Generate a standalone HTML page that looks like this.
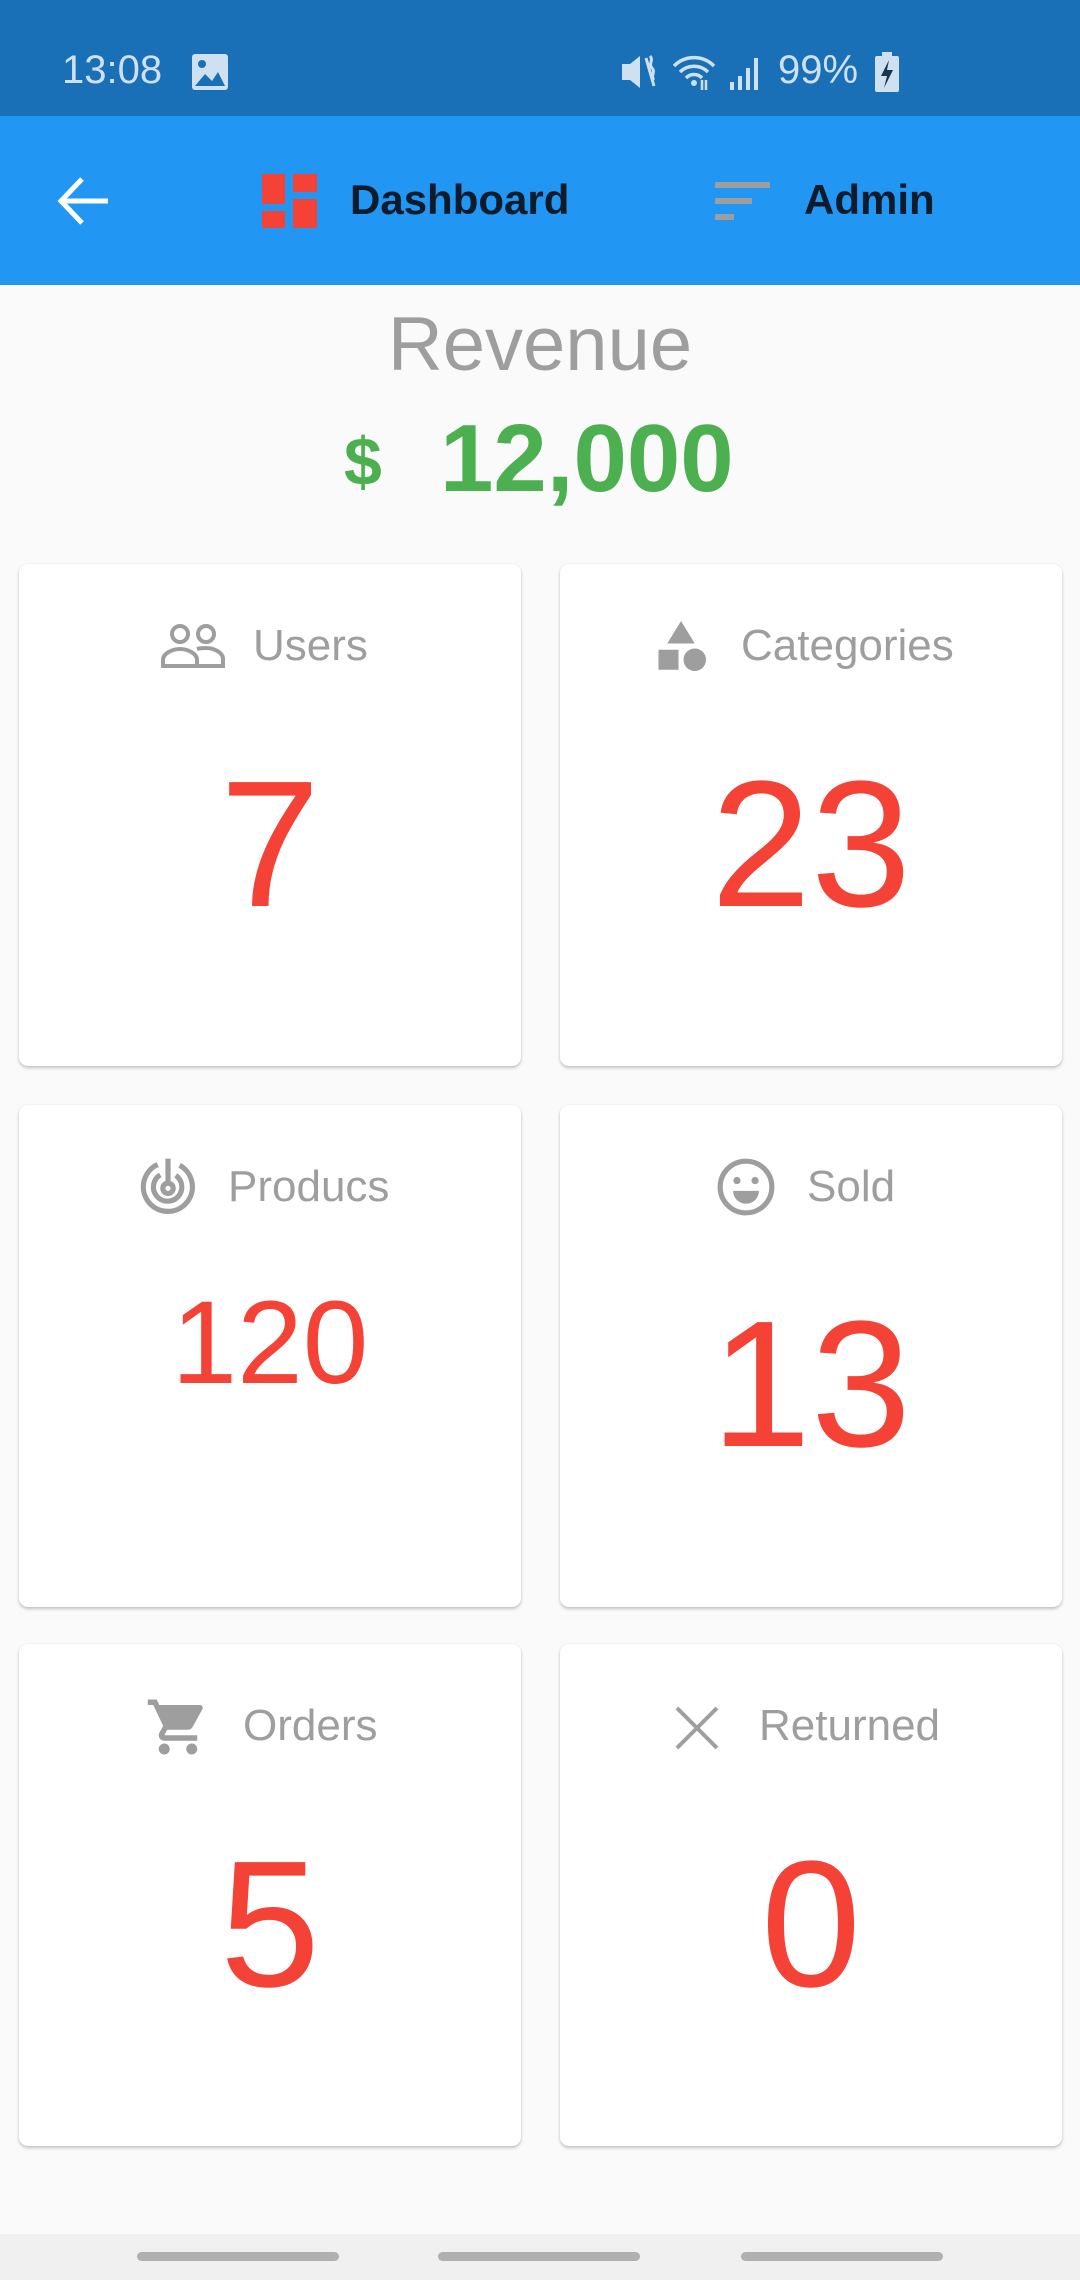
<!DOCTYPE html>
<html><head><meta charset="utf-8"><style>
*{margin:0;padding:0;box-sizing:border-box}
body{width:1080px;height:2280px;background:#fafafa;font-family:"Liberation Sans",Roboto,sans-serif;position:relative;overflow:hidden}
.abs{position:absolute}
.card{position:absolute;width:502px;height:502px;background:#fff;border-radius:9px;box-shadow:0 2px 3px rgba(0,0,0,.22),0 0 2px rgba(0,0,0,.06)}
.lbl{position:absolute;font-size:44px;color:#9e9e9e;line-height:44px;top:60px}
.ic{position:absolute;top:48px}
.num{position:absolute;left:0;width:502px;text-align:center;color:#f44336}
</style></head><body>
<div class="abs" style="left:0;top:0;width:1080px;height:116px;background:#1a70b6"></div>
<div class="abs" style="left:62px;top:46px;font-size:40px;color:#cfe0f1;line-height:48px">13:08</div>
<svg class="abs" style="left:192px;top:54px" width="36" height="36" viewBox="0 0 36 36"><rect x="0" y="0" width="36" height="36" rx="3" fill="#cfe0f1"/><circle cx="10" cy="10" r="4" fill="#1a70b6"/><path d="M3 32 L13 20 L20 27 L26 18 L33 32Z" fill="#1a70b6"/></svg>
<svg class="abs" style="left:620px;top:52px" width="44" height="40" viewBox="0 0 44 40"><path d="M2 12h8l10-8v32l-10-8H2z" fill="#cfe0f1"/><path d="M26 6l8 28M30 4c4 4-2 8 2 12s-2 8 2 12" stroke="#cfe0f1" stroke-width="3" fill="none"/></svg>
<svg class="abs" style="left:672px;top:52px" width="48" height="40" viewBox="0 0 48 40"><path d="M2 14a28 28 0 0 1 40 0M8 20a20 20 0 0 1 28 0M14 26a11 11 0 0 1 16 0" stroke="#cfe0f1" stroke-width="3.5" fill="none"/><circle cx="22" cy="31" r="3" fill="#cfe0f1"/><path d="M30 28v10M34 38v-10" stroke="#cfe0f1" stroke-width="2.5"/></svg>
<svg class="abs" style="left:728px;top:56px" width="36" height="34" viewBox="0 0 36 34"><rect x="2" y="26" width="4" height="8" fill="#cfe0f1"/><rect x="10" y="20" width="4" height="14" fill="#cfe0f1"/><rect x="18" y="12" width="4" height="22" fill="#cfe0f1"/><rect x="26" y="2" width="4" height="32" fill="#cfe0f1"/></svg>
<div class="abs" style="left:778px;top:46px;font-size:40px;color:#cfe0f1;line-height:48px">99%</div>
<svg class="abs" style="left:875px;top:52px" width="24" height="40" viewBox="0 0 24 40"><rect x="7" y="0" width="10" height="4" fill="#cfe0f1"/><rect x="0" y="4" width="24" height="36" rx="2" fill="#cfe0f1"/><path d="M14 8 L6 24 H12 L9 36 L18 18 H12Z" fill="#1a3550"/></svg>

<div class="abs" style="left:0;top:116px;width:1080px;height:169px;background:#2196f3"></div>
<svg class="abs" style="left:56px;top:176px" width="56" height="50" viewBox="0 0 56 50"><path d="M52 25H6M26 3L5 25l21 22" stroke="#fff" stroke-width="5" fill="none"/></svg>
<div class="abs" style="left:262px;top:174px;width:23px;height:30px;background:#f44336"></div>
<div class="abs" style="left:262px;top:211px;width:23px;height:17px;background:#f44336"></div>
<div class="abs" style="left:293px;top:174px;width:24px;height:18px;background:#f44336"></div>
<div class="abs" style="left:293px;top:199px;width:24px;height:29px;background:#f44336"></div>
<div class="abs" style="left:350px;top:176px;font-size:42px;font-weight:bold;color:#0d1b2a;line-height:48px">Dashboard</div>
<div class="abs" style="left:715px;top:182px;width:55px;height:6px;background:#9e9e9e"></div>
<div class="abs" style="left:715px;top:198px;width:37px;height:6px;background:#9e9e9e"></div>
<div class="abs" style="left:715px;top:214px;width:19px;height:6px;background:#9e9e9e"></div>
<div class="abs" style="left:804px;top:176px;font-size:42px;font-weight:bold;color:#0d1b2a;line-height:48px">Admin</div>

<div class="abs" style="left:0;top:307px;width:1080px;text-align:center;font-size:76px;line-height:76px;color:#9e9e9e">Revenue</div>
<div class="abs" style="left:344px;top:420px;font-size:68px;line-height:84px;color:#4caf50;font-weight:bold">$</div>
<div class="abs" style="left:440px;top:404px;font-size:96px;line-height:110px;color:#4caf50;font-weight:bold">12,000</div>

<div class="card" style="left:19px;top:564px">
<svg class="ic" style="left:141px;top:58px" width="66" height="48" viewBox="0 0 66 48"><g stroke="#9e9e9e" stroke-width="4" fill="none"><circle cx="20" cy="12" r="8"/><circle cx="46" cy="12" r="8"/><path d="M3 44v-6c0-7 10-11 17-11s17 4 17 11v6zM37 27c3-1 6-1 9-1 7 0 17 4 17 11v7H37"/></g></svg>
<div class="lbl" style="left:234px">Users</div>
<div class="num" style="top:191px;font-size:180px;line-height:180px">7</div>
</div>
<div class="card" style="left:560px;top:564px">
<svg class="ic" style="left:91px;top:52px" width="60" height="60" viewBox="0 0 24 24"><path fill="#9e9e9e" d="M12 2l-5.5 9h11zM3 13.5h8v8H3zM17.5 13a4.5 4.5 0 1 0 0.01 0z"/></svg>
<div class="lbl" style="left:181px">Categories</div>
<div class="num" style="top:191px;font-size:180px;line-height:180px">23</div>
</div>
<div class="card" style="left:19px;top:1105px">
<svg class="ic" style="left:118px;top:51px" width="62" height="62" viewBox="0 0 24 24"><g stroke="#9e9e9e" stroke-width="2" fill="none"><path d="M8 3.3A9.5 9.5 0 1 0 16.5 3.6"/><path d="M9 7.3A5.5 5.5 0 1 0 15 7.5"/><circle cx="12" cy="12.5" r="2"/><path d="M12 10.5V1"/></g></svg>
<div class="lbl" style="left:209px">Producs</div>
<div class="num" style="top:179px;font-size:118px;line-height:118px">120</div>
</div>
<div class="card" style="left:560px;top:1105px">
<svg class="ic" style="left:155px;top:51px" width="62" height="62" viewBox="0 0 24 24"><circle cx="12" cy="12" r="10" stroke="#9e9e9e" stroke-width="2" fill="none"/><circle cx="8.5" cy="9.5" r="1.4" fill="#9e9e9e"/><circle cx="15.5" cy="9.5" r="1.4" fill="#9e9e9e"/><path d="M7 13.5h10a5 5 0 0 1-10 0z" fill="#9e9e9e"/></svg>
<div class="lbl" style="left:247px">Sold</div>
<div class="num" style="top:190px;font-size:180px;line-height:180px">13</div>
</div>
<div class="card" style="left:19px;top:1644px">
<svg class="ic" style="left:126px;top:50px" width="66" height="66" viewBox="0 0 24 24"><path fill="#9e9e9e" d="M7 18c-1.1 0-2 .9-2 2s.9 2 2 2 2-.9 2-2-.9-2-2-2zM1 2v2h2l3.6 7.6-1.35 2.45c-.16.28-.25.61-.25.96 0 1.1.9 2 2 2h12v-2H7.42c-.14 0-.25-.11-.25-.25l.03-.12.9-1.630h7.45c.75 0 1.41-.41 1.75-1.03l3.58-6.49A1 1 0 0 0 20 4H5.21l-.94-2H1zm16 16c-1.1 0-2 .9-2 2s.9 2 2 2 2-.9 2-2-.9-2-2-2z"/></svg>
<div class="lbl" style="left:224px">Orders</div>
<div class="num" style="top:191px;font-size:180px;line-height:180px">5</div>
</div>
<div class="card" style="left:560px;top:1644px">
<svg class="ic" style="left:113px;top:60px" width="48" height="48" viewBox="0 0 48 48"><path d="M4 4L44 44M44 4L4 44" stroke="#9e9e9e" stroke-width="4"/></svg>
<div class="lbl" style="left:199px">Returned</div>
<div class="num" style="top:191px;font-size:180px;line-height:180px">0</div>
</div>

<div class="abs" style="left:0;top:2234px;width:1080px;height:46px;background:#f0f0f0"></div>
<div class="abs" style="left:137px;top:2252px;width:202px;height:9px;border-radius:5px;background:#b0b0b0"></div>
<div class="abs" style="left:438px;top:2252px;width:202px;height:9px;border-radius:5px;background:#b0b0b0"></div>
<div class="abs" style="left:741px;top:2252px;width:202px;height:9px;border-radius:5px;background:#b0b0b0"></div>
</body></html>
